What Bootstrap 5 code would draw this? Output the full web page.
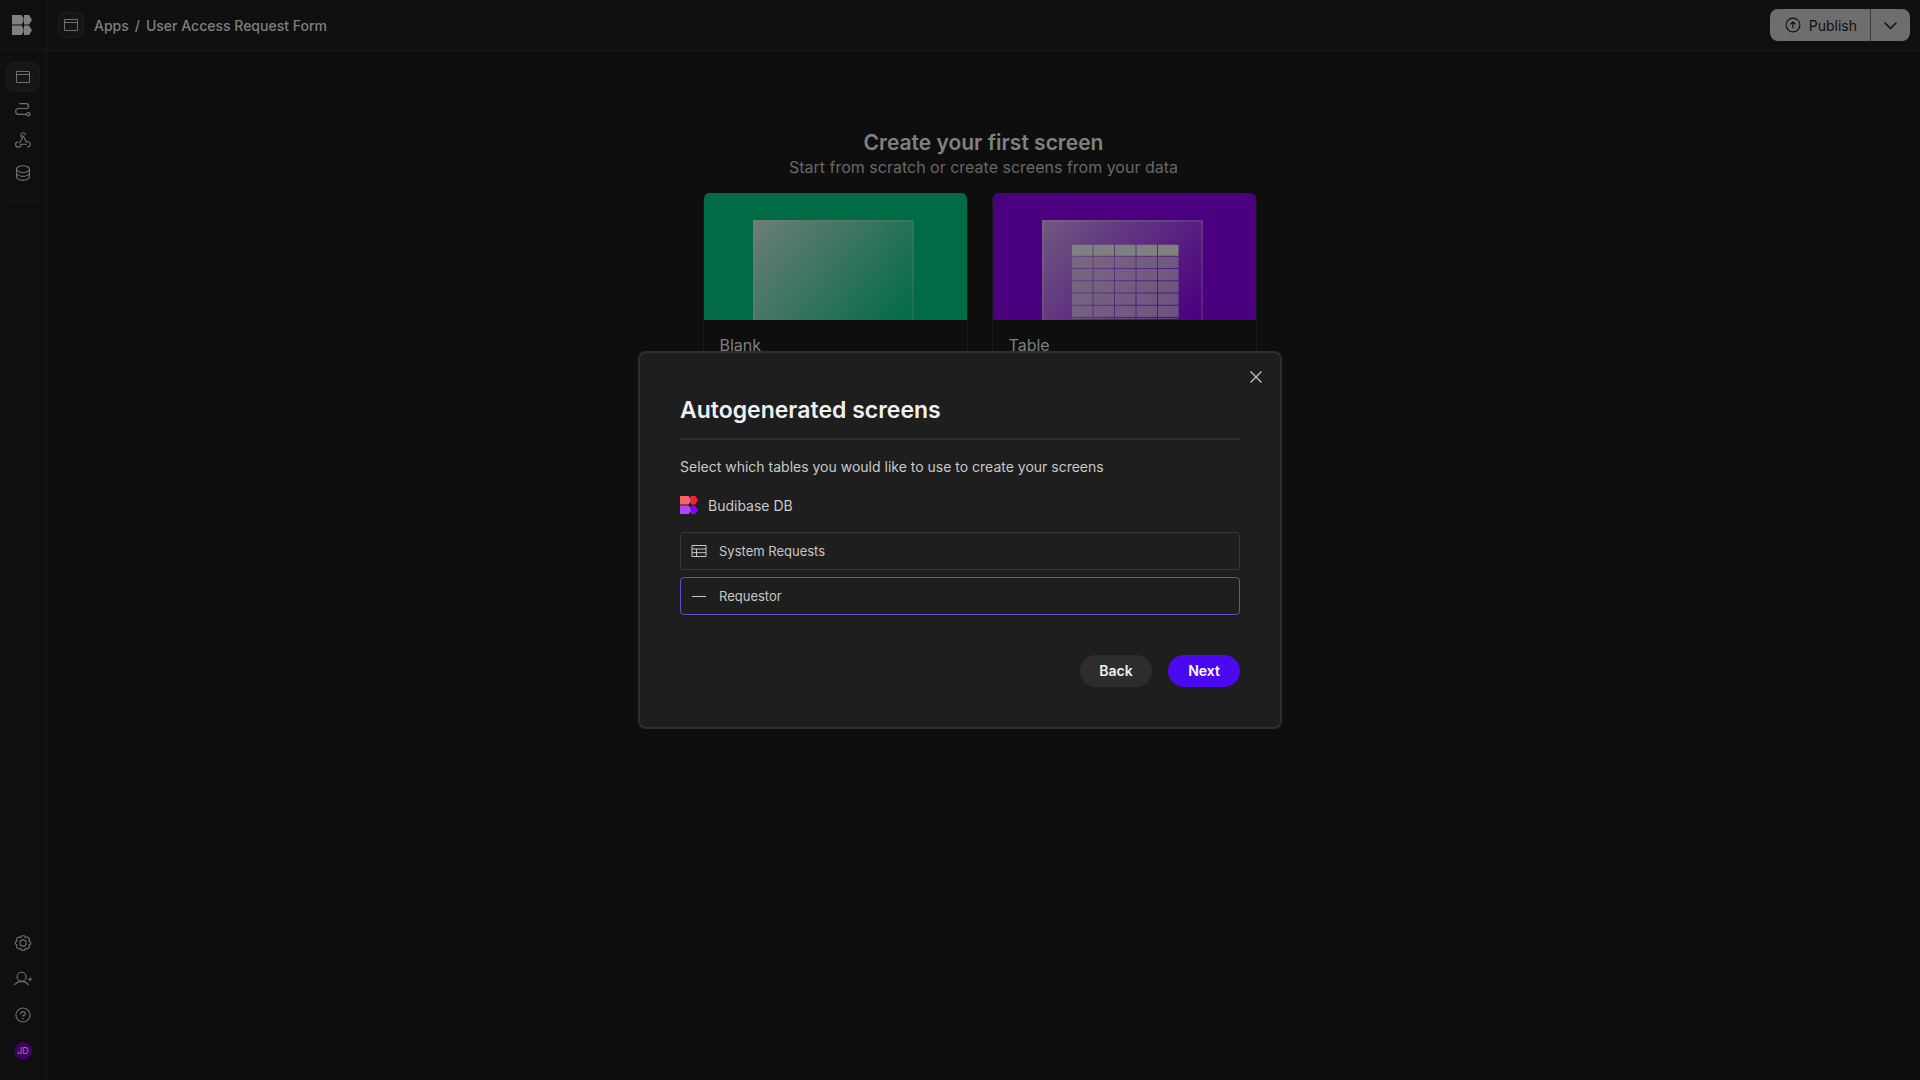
<!DOCTYPE html>
<html lang="en">
<head>
<meta charset="utf-8">
<meta name="viewport" content="width=device-width, initial-scale=1">
<title>User Access Request Form</title>
<link href="https://cdn.jsdelivr.net/npm/bootstrap@5.3.0/dist/css/bootstrap.min.css" rel="stylesheet">
<style>
body{background:#0e0e0e;color:#7f7f7f;font-family:Inter,"Liberation Sans",sans-serif;font-size:14px;line-height:22px}
svg{display:block;flex:none}
.line-icon{fill:none;stroke:currentColor;stroke-linecap:round;stroke-linejoin:round;stroke-width:16}
.side{width:47px;border-right:1px solid #191919;background:#0f0f0f;color:#696969}
.side-logo{height:50px;border-bottom:1px solid #191919;padding:15px 12px;color:#808080}
.side-nav{padding:12px 6px 0;gap:2px}
.side-link{display:flex;align-items:center;justify-content:center;width:34px;height:30px;border:1px solid transparent;border-radius:8px;color:#707070}
.side-link.active{background:#161616;border-color:#1b1b1b}
.side-rule{height:1px;margin:11px 0 0;background:#191919}
.side-foot{padding:0 6px 14px;gap:6px}
.avatar{width:18px;height:18px;border-radius:50%;background:#3f0060;color:#8c7896;font-size:9px;line-height:18px;text-align:center;font-weight:500}
.topbar{height:51px;background:#101010;border-bottom:1px solid #191919;padding:0 10px 0 11px}
.app-tile{width:26px;height:26px;border:1px solid #1c1c1c;border-radius:6px;background:#151515;color:#707070;margin-right:10px}
.crumbs{font-weight:500;gap:6px;color:#7f7f7f;padding-top:2px}
.crumbs a{color:inherit;text-decoration:none}
.publish{height:32px;background:#6e6e6e;color:#0e0e0e;border:0;padding:0 14px;border-radius:8px;gap:7px;line-height:22px;font-size:14px}
.publish span{padding-top:2px;line-height:20px}
.publish+.publish{border-left:1px solid #3e3e3e;padding:0 12px}
.starter{padding:78px 0 0}
.starter h1{font-size:21px;line-height:28px;font-weight:600;margin:0;color:#818181}
.starter p{font-size:16px;line-height:20px;margin:0 0 16px;color:#686868}
.tiles{gap:24px;padding-right:8px}
.tile{width:265px;border:1px solid #191919;border-top:0;border-radius:6px;overflow:hidden;color:#7f7f7f;background:#0e0e0e}
.tile-name{font-size:16px;line-height:24px;padding:13px 16px}
.modal{--bs-modal-width:644px;pointer-events:none}
.modal-content{background:#1e1e1e;border:2px solid #2f2f2f;border-radius:8px;padding:40px;color:#c8c8c8}
.modal-content h2{font-size:23px;line-height:32px;font-weight:600;color:#f0f0f0;margin:0;padding:1px 0 12px;border-bottom:2px solid #2d2d2d}
.stack{gap:16px;padding-top:16px}
.source{gap:10px}
.source span{padding-top:2px;line-height:20px}
.choices{gap:7px}
.choice{height:38px;background:#1e1e1e;border:1px solid #393939;border-radius:4px;padding:0 10px;gap:12px;color:#c8c8c8;font-size:13px;line-height:20px}
.choice[aria-pressed=true]{border-color:#6450c8}
.actions{gap:16px;padding-top:40px}
.pill{height:32px;width:72px;border:0;border-radius:16px;background:#2d2d2d;color:#f0f0f0;font-size:14px;line-height:22px;font-weight:600}
.pill-go{background:#4b09f0;color:#fff}
.shut{position:absolute;top:14px;right:14px;width:20px;height:20px;padding:0;border:0;background:none;color:#c8c8c8;display:flex;align-items:center;justify-content:center}
</style>
<script src="https://cdn.jsdelivr.net/npm/bootstrap@5.3.0/dist/js/bootstrap.bundle.min.js"></script>
</head>
<body>
<svg width="0" height="0" class="position-absolute" aria-hidden="true">
  <symbol id="window" viewBox="0 0 18 18"><path d="M2.5 3.5h13v11h-13zM2.5 6.5h13" fill="none" stroke="currentColor" stroke-linejoin="round"/></symbol>
</svg>
<div class="d-flex min-vh-100">
  <aside class="side d-flex flex-column flex-shrink-0">
    <div class="side-logo">
      <svg width="20" height="20" viewBox="0 0 20 20" fill="currentColor"><path d="M0 0h9.500l2 3v3.500l-2 3H0zM12 0h5l3 4.750-3 4.750h-5zM0 10.500h9.500l2 3V17l-2 3H0zM12 10.500h5l3 4.750L17 20h-5z"/></svg>
    </div>
    <nav class="side-nav d-flex flex-column" aria-label="Workspace">
      <a href="#" class="side-link active" aria-label="Design"><svg width="18" height="18"><use href="#window"/></svg></a>
      <a href="#" class="side-link" aria-label="Automations"><svg class="line-icon" width="18" height="18" viewBox="0 0 256 256"><path d="M80 52h94a34 34 0 0 1 0 68H66a42 42 0 0 0 0 84h112"/><circle cx="204" cy="204" r="24"/></svg></a>
      <a href="#" class="side-link" aria-label="APIs"><svg class="line-icon" width="18" height="18" viewBox="0 0 256 256"><path d="M128 52l49 92a36 36 0 1 1 14 66M54 140a38 38 0 1 0 44 34h78M78 156l44-78a34 34 0 1 1 42-38"/></svg></a>
      <a href="#" class="side-link" aria-label="Data"><svg class="line-icon" width="18" height="18" viewBox="0 0 256 256"><ellipse cx="128" cy="72" rx="92" ry="48"/><path d="M36 72v112c0 26 41 48 92 48s92-22 92-48V72M36 128c0 26 41 48 92 48s92-22 92-48"/></svg></a>
      <div class="side-rule"></div>
    </nav>
    <div class="side-foot d-flex flex-column mt-auto">
      <a href="#" class="side-link" aria-label="Settings"><svg class="line-icon" width="18" height="18" viewBox="0 0 256 256"><circle cx="128" cy="128" r="44"/><path d="M107 24h42l13 27 31-9 28 28-9 31 25 12v30l-25 12 9 31-28 28-31-9-13 27h-42l-13-27-31 9-28-28 9-31-25-12v-30l25-12-9-31 28-28 31 9z"/></svg></a>
      <a href="#" class="side-link" aria-label="Invite user"><svg class="line-icon" width="18" height="18" viewBox="0 0 256 256"><circle cx="108" cy="96" r="64"/><path d="M10 208c24-28 58-46 98-46s74 18 98 46M204 132h50M229 107v50"/></svg></a>
      <a href="#" class="side-link" aria-label="Help"><svg class="line-icon" width="18" height="18" viewBox="0 0 256 256"><circle cx="128" cy="128" r="100"/><path d="M128 144v-8c18 0 32-13 32-28s-14-28-32-28-32 13-32 28v4"/><circle cx="128" cy="178" r="4" fill="currentColor"/></svg></a>
      <a href="#" class="side-link text-decoration-none" aria-label="Account"><span class="avatar">JD</span></a>
    </div>
  </aside>
  <div class="flex-grow-1 d-flex flex-column">
    <header class="topbar d-flex align-items-center justify-content-between">
      <div class="d-flex align-items-center">
        <span class="app-tile d-flex align-items-center justify-content-center"><svg width="18" height="18"><use href="#window"/></svg></span>
        <nav class="crumbs d-flex" aria-label="Breadcrumb"><a href="#">Apps</a><span>/</span><a href="#">User Access Request Form</a></nav>
      </div>
      <div class="btn-group">
        <button type="button" class="btn publish d-flex align-items-center"><svg class="line-icon" width="18" height="18" viewBox="0 0 256 256"><circle cx="128" cy="128" r="98"/><path d="M98 114l30-30 30 30M128 84v84"/></svg><span>Publish</span></button>
        <button type="button" class="btn publish d-flex align-items-center" aria-label="Publish options"><svg width="15" height="15" viewBox="0 0 15 15" fill="none" stroke="currentColor" stroke-width="1.500" stroke-linecap="round" stroke-linejoin="round"><path d="M2 5l5.500 5.500L13 5"/></svg></button>
      </div>
    </header>
    <main class="starter text-center">
      <h1>Create your first screen</h1>
      <p>Start from scratch or create screens from your data</p>
      <div class="tiles d-flex justify-content-center text-start">
        <div class="tile">
          <svg width="263" height="127" viewBox="0 0 263 127">
            <defs><linearGradient id="fadeA" gradientUnits="userSpaceOnUse" x1="49" y1="27" x2="185" y2="140"><stop offset="0" stop-color="#808080" stop-opacity=".85"/><stop offset="1" stop-color="#808080" stop-opacity=".05"/></linearGradient></defs>
            <path fill="#006b45" d="M0 0h263v127H0z"/>
            <path fill="url(#fadeA)" d="M49 27h161v100H49z"/><path d="M50 130V28h159v102" fill="none" stroke="#808080" stroke-opacity=".2" stroke-width="2"/>
          </svg>
          <div class="tile-name">Blank</div>
        </div>
        <div class="tile">
          <svg width="263" height="127" viewBox="0 0 263 127">
            <defs>
              <linearGradient id="fadeB" gradientUnits="userSpaceOnUse" x1="49" y1="27" x2="185" y2="140"><stop offset="0" stop-color="#808080" stop-opacity=".7"/><stop offset="1" stop-color="#808080" stop-opacity=".02"/></linearGradient>
              <pattern id="cells" patternUnits="userSpaceOnUse" x="79" y="51.500" width="21.500" height="12.250"><path d="M0 0h20.500v11.250H0z" fill="#808080"/></pattern>
            </defs>
            <path fill="#4b0080" d="M0 0h263v127H0z"/>
            <path fill="url(#fadeB)" d="M49 27h161v100H49z"/><path d="M50 130V28h159v102" fill="none" stroke="#808080" stroke-opacity=".25" stroke-width="2"/>
            <path fill="url(#cells)" d="M79 51.500h107v12H79z"/><path fill="url(#cells)" opacity=".62" d="M79 63.750h107v62H79z"/>
          </svg>
          <div class="tile-name">Table</div>
        </div>
      </div>
    </main>
  </div>
</div>

<div class="modal d-block" role="dialog" aria-labelledby="dialogTitle">
  <div class="modal-dialog modal-dialog-centered">
    <div class="modal-content">
      <button type="button" class="shut" aria-label="Close"><svg width="12" height="12" viewBox="0 0 12 12" stroke="currentColor" stroke-width="1.200"><path d="M.5.5l11 11M11.500.5l-11 11"/></svg></button>
      <h2 id="dialogTitle">Autogenerated screens</h2>
      <div class="stack d-flex flex-column">
        <div>Select which tables you would like to use to create your screens</div>
        <div class="source d-flex align-items-center">
          <svg width="18" height="18" viewBox="0 0 20 20"><path fill="#ff5f67" d="M0 0h9.500l2.500 3v3.500l-2.500 3H0z"/><path fill="#ff1f31" d="M12 0h5l3 4.750-3 4.750h-5z"/><path fill="#b347ff" d="M0 10.500h9.500l2.500 3V17l-2.500 3H0z"/><path fill="#8500f5" d="M12 10.500h5l3 4.750L17 20h-5z"/></svg>
          <span>Budibase DB</span>
        </div>
        <div class="choices d-flex flex-column">
          <button type="button" class="choice d-flex align-items-center" aria-pressed="false"><svg width="16" height="16" viewBox="0 0 16 16" fill="none" stroke="currentColor"><path d="M1 2.500h14v11H1zM1 6h14M1 9.700h14M5.500 6v7.500"/></svg>System Requests</button>
          <button type="button" class="choice d-flex align-items-center" aria-pressed="true"><svg width="16" height="16" viewBox="0 0 16 16" stroke="currentColor"><path d="M1 8.500h14"/></svg>Requestor</button>
        </div>
      </div>
      <div class="actions d-flex justify-content-end">
        <button type="button" class="pill">Back</button>
        <button type="button" class="pill pill-go">Next</button>
      </div>
    </div>
  </div>
</div>
</body>
</html>
